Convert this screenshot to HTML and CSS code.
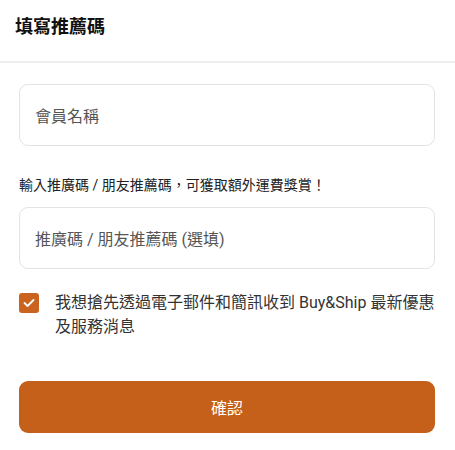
FILE: index.html
```html
<!DOCTYPE html>
<html lang="zh-Hant">
<head>
	<meta charset="utf-8">
	<title>填寫推薦碼</title>
	<link rel="stylesheet" href="styles.css">
</head>
<body>
	<div class="header">填寫推薦碼</div>
	<div class="content">
		<div class="field">會員名稱</div>
		<p class="hint">輸入推廣碼 / 朋友推薦碼，可獲取額外運費獎賞！</p>
		<div class="field">推廣碼 / 朋友推薦碼 (選填)</div>
		<label class="agree">
			<span class="check">
				<svg width="12" height="10" viewBox="0 0 12 10"><path d="M1.5 5 L4.5 8 L10.5 2" fill="none" stroke="#fff" stroke-width="1.8" stroke-linecap="round" stroke-linejoin="round"/></svg>
			</span>
			<span class="agree-text">我想搶先透過電子郵件和簡訊收到 Buy&amp;Ship 最新優惠及服務消息</span>
		</label>
		<button class="confirm">確認</button>
	</div>
</body>
</html>
```

FILE: styles.css
```css
body {
	margin: 0;
	background-color: #fff;
	font-family: Roboto, "Noto Sans CJK TC", sans-serif;
	color: #222;
}

.header {
	height: 63px;
	box-sizing: border-box;
	padding: 15px 15px 0 15px;
	font-size: 18px;
	font-weight: bold;
	line-height: 24px;
	color: #111;
	border-bottom: 2px solid #eeeeee;
}

.content {
	padding: 21px 20px 0 19px;
}

.field {
	height: 62px;
	box-sizing: border-box;
	border: 1px solid #e3e3e3;
	border-radius: 9px;
	padding: 0 15px;
	display: flex;
	align-items: center;
	font-size: 16px;
	color: #555;
}

.hint {
	margin: 29px 0 12px 0;
	font-size: 14px;
	line-height: 20px;
	color: #222;
}

.agree {
	display: flex;
	gap: 16px;
	margin-top: 22px;
	font-size: 16px;
	line-height: 24px;
	color: #333;
}

.check {
	flex: none;
	width: 20px;
	height: 20px;
	margin-top: 2px;
	border-radius: 3px;
	background-color: #c9631d;
	display: flex;
	align-items: center;
	justify-content: center;
}

.confirm {
	display: block;
	width: 100%;
	height: 52px;
	margin-top: 42px;
	border: none;
	border-radius: 9px;
	background-color: #c4601a;
	color: #fff;
	font-family: inherit;
	font-size: 16px;
}
```
